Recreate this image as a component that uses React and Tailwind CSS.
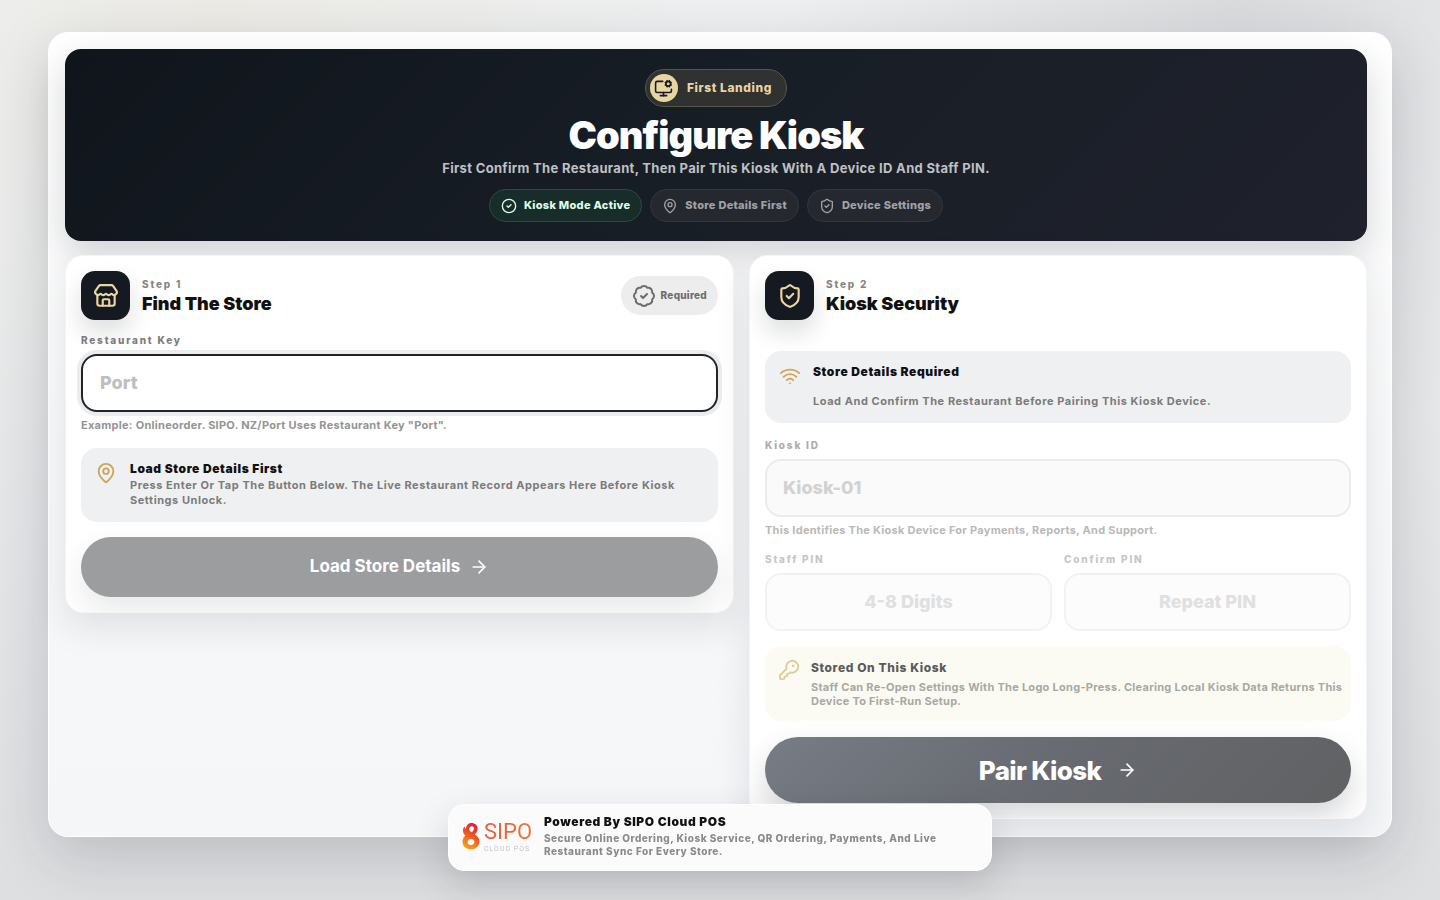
import React, { useState } from 'react';
import {
    ArrowRight, BadgeCheck, CircleCheck, KeyRound, MapPin, MonitorCog, ShieldCheck, Store, Wifi
} from 'lucide-react';

const STATUS = [
    { label: 'Kiosk Mode Active', icon: CircleCheck, style: 'bg-[#182d2a] border-[#2b4a42] text-[#dcfce7]' },
    { label: 'Store Details First', icon: MapPin, style: 'bg-[#25282f] border-[#33363d] text-[#a0a2a6]' },
    { label: 'Device Settings', icon: ShieldCheck, style: 'bg-[#25282f] border-[#33363d] text-[#a0a2a6]' },
];

function StepHeader({ icon: Icon, step, title, children }) {
    return (
        <div className="flex items-center gap-3">
            <div className="flex size-[49px] shrink-0 items-center justify-center rounded-[14px] bg-[#151a22] text-[#e8d5a0] shadow-[0_12px_24px_rgba(15,20,30,0.14)]">
                <Icon className="size-[26px]" />
            </div>
            <div className="min-w-0 flex-1">
                <p className="text-[10px] leading-3 font-extrabold tracking-[0.18em] text-[#858585]">{step}</p>
                <h2 className="mt-1 text-[18px] leading-5 font-black text-[#111]">{title}</h2>
            </div>
            {children}
        </div>
    );
}

function SipoLogo() {
    return (
        <div className="flex w-[70px] shrink-0 items-center gap-1">
            <svg viewBox="0 0 18 28" className="h-7 w-[18px] shrink-0" aria-hidden="true">
                <defs>
                    <linearGradient id="flame" x1="0.7" y1="0" x2="0.3" y2="1">
                        <stop offset="0" stopColor="#d81f3a" />
                        <stop offset="0.5" stopColor="#ee5a24" />
                        <stop offset="1" stopColor="#f9a51a" />
                    </linearGradient>
                </defs>
                <path
                    fill="url(#flame)"
                    fillRule="evenodd"
                    d="M9.400 1C13 1 15.600 3.300 15.600 6.700c0 2.600-1.400 4.300-2.900 5.800 2.900 1.500 4.800 3.900 4.800 7.100 0 4.500-3.700 7.700-8.500 7.700S.5 24.200.5 19.700c0-2.500 1.100-4.500 2.900-6.100C1.800 12.300.9 10.700.9 8.600c0-1.700.7-3.200 1.900-4.200 0 1.200.3 2.100.9 2.900C4.100 3.600 6.200 1 9.400 1ZM10 4.200C8.300 4.200 7.200 5.300 7.200 6.900c0 1.300.9 2.400 2.400 3.300C11 9.300 12 8.200 12 6.600 12 5.200 11.200 4.200 10 4.200ZM9 17c-2 0-3.400 1.300-3.400 3.100S7 23.200 9 23.200s3.400-1.300 3.400-3.100S11 17 9 17Z"
                />
            </svg>
            <div className="font-[Roboto,sans-serif]">
                <p className="bg-linear-to-r from-[#e9583c] to-[#ee7437] bg-clip-text text-[22px] leading-[26px] font-normal text-transparent">SIPO</p>
                <p className="text-[7px] leading-2 tracking-[1px] whitespace-nowrap text-[#c4c4c4]">CLOUD POS</p>
            </div>
        </div>
    );
}

export default function App() {
    const [restaurantKey, setRestaurantKey] = useState('');

    return (
        <div className="min-h-screen bg-[radial-gradient(circle_at_15%_0%,#ecebe6_0%,transparent_32%),radial-gradient(circle_at_86%_0%,#d9dbdd_0%,transparent_30%),linear-gradient(180deg,#eef0f1_0%,#e5e6e8_60%,#dedfe1_100%)] px-12 pt-8 pb-[63px] font-[Inter,sans-serif]">
            <main className="rounded-[20px] border border-white bg-linear-to-b from-white via-[#f8f9fa] to-[#f4f6f8] pt-4 pr-6 pb-[17px] pl-4 shadow-[0_20px_60px_rgba(30,35,45,0.18)]">
                <header className="flex flex-col items-center rounded-[16px] bg-linear-135 from-[#10151c] via-[#181e26] to-[#1f212c] px-6 pt-5 pb-[19px] text-center shadow-[0_14px_36px_rgba(30,32,45,0.18)]">
                    <div className="flex h-[38px] items-center gap-[9px] rounded-full border border-[#565649] bg-[#303131] pr-[14px] pl-1 text-[#e8d5a0]">
                        <span className="flex size-7 items-center justify-center rounded-full bg-[#e8d5a0] text-[#151a22]">
                            <MonitorCog className="size-[19px]" />
                        </span>
                        <span className="text-[12px] font-extrabold tracking-wider">First Landing</span>
                    </div>
                    <h1 className="mt-2 text-[38px] leading-10 font-black tracking-tight text-white">Configure Kiosk</h1>
                    <p className="mt-1 text-[13px] leading-[18px] font-bold tracking-wide text-[#bfc1c4]">
                        First Confirm The Restaurant, Then Pair This Kiosk With A Device ID And Staff PIN.
                    </p>
                    <div className="mt-3 flex flex-wrap justify-center gap-2">
                        {STATUS.map(({ label, icon: Icon, style }) => (
                            <span key={label} className={`flex h-[33px] items-center gap-[7px] rounded-full border px-[11px] text-[11px] font-extrabold tracking-wide ${style}`}>
                                <Icon className="size-4" />
                                {label}
                            </span>
                        ))}
                    </div>
                </header>

                <div className="mt-[14px] grid grid-cols-[669fr_618fr] items-start gap-[15px]">
                    {/* Step 1 */}
                    <section className="overflow-hidden rounded-[18px] border border-[#f4f4f5] bg-white p-[15px] shadow-[0_14px_36px_rgba(30,35,45,0.11)]">
                        <StepHeader icon={Store} step="Step 1" title="Find The Store">
                            <span className="flex h-[39px] items-center gap-[5px] rounded-full bg-[#ededed] px-[11px] text-[10px] font-extrabold tracking-wide text-[#6c6c6c]">
                                <BadgeCheck className="size-6" />
                                Required
                            </span>
                        </StepHeader>

                        <label htmlFor="restaurant-key" className="mt-[14px] block text-[10px] leading-3 font-extrabold tracking-[0.18em] text-[#7c7c7c]">
                            Restaurant Key
                        </label>
                        <input
                            id="restaurant-key"
                            value={restaurantKey}
                            onChange={(e) => setRestaurantKey(e.target.value)}
                            placeholder="Port"
                            className="mt-2 block h-[58px] w-full rounded-[16px] border-2 border-[#222527] bg-white px-[17px] pb-[2px] text-[18px] font-extrabold text-[#111] ring-4 ring-[#ebeced] outline-none placeholder:text-[#bfbfbf]"
                        />
                        <p className="mt-[6px] text-[11px] leading-[15px] font-bold tracking-wide text-[#949494]">
                            Example: Onlineorder. SIPO. NZ/Port Uses Restaurant Key "Port".
                        </p>

                        <div className="mt-[15px] flex gap-[13px] rounded-[16px] bg-[#eff0f2] px-[14px] pt-3 pb-[14px]">
                            <MapPin className="mt-[2px] size-[22px] shrink-0 text-[#cba65c]" />
                            <div>
                                <h3 className="text-[12px] leading-[18px] font-black tracking-wider text-[#111]">Load Store Details First</h3>
                                <p className="text-[11px] leading-[15px] font-bold tracking-wider text-[#7b7b7b]">
                                    Press Enter Or Tap The Button Below. The Live Restaurant Record Appears Here Before Kiosk Settings Unlock.
                                </p>
                            </div>
                        </div>

                        <button type="button" className="mt-[15px] flex h-[60px] w-full items-center justify-center gap-[9px] rounded-full bg-[#9c9d9f] text-[17px] font-bold text-white shadow-[0_14px_30px_rgba(30,35,45,0.1)]">
                            Load Store Details
                            <ArrowRight className="size-5" />
                        </button>
                    </section>

                    {/* Step 2 */}
                    <section className="overflow-hidden rounded-[18px] border border-[#f4f4f5] bg-white p-[15px] shadow-[0_14px_36px_rgba(30,35,45,0.11)]">
                        <StepHeader icon={ShieldCheck} step="Step 2" title="Kiosk Security" />

                        <div className="mt-[31px] flex gap-3 rounded-[16px] bg-[#eff0f2] px-[14px] pt-[13px] pb-[14px]">
                            <Wifi className="mt-[1px] size-[22px] shrink-0 text-[#cba65c]" />
                            <div>
                                <h3 className="text-[12px] leading-[15px] font-black tracking-wider text-[#111]">Store Details Required</h3>
                                <p className="mt-[15px] text-[11px] leading-[15px] font-bold tracking-wider text-[#7b7b7b]">
                                    Load And Confirm The Restaurant Before Pairing This Kiosk Device.
                                </p>
                            </div>
                        </div>

                        <label htmlFor="kiosk-id" className="mt-4 block text-[10px] leading-3 font-extrabold tracking-[0.18em] text-[#acacac]">
                            Kiosk ID
                        </label>
                        <input
                            id="kiosk-id"
                            disabled
                            placeholder="Kiosk-01"
                            className="mt-2 block h-[58px] w-full rounded-[16px] border-2 border-[#ececec] bg-[#fafafa] px-4 pb-[2px] text-[18px] font-extrabold placeholder:text-[#d2d2d2]"
                        />
                        <p className="mt-[6px] text-[11px] leading-[15px] font-bold tracking-wide text-[#b9b9b9]">
                            This Identifies The Kiosk Device For Payments, Reports, And Support.
                        </p>

                        <div className="mt-[15px] grid grid-cols-2 gap-3">
                            <div>
                                <label htmlFor="staff-pin" className="block text-[10px] leading-3 font-extrabold tracking-[0.18em] text-[#c6c6c6]">
                                    Staff PIN
                                </label>
                                <input
                                    id="staff-pin"
                                    disabled
                                    placeholder="4-8 Digits"
                                    className="mt-2 block h-[58px] w-full rounded-[16px] border-2 border-[#f2f2f2] bg-[#fcfcfc] px-4 pb-[2px] text-center text-[18px] font-extrabold placeholder:text-[#e0e0e0]"
                                />
                            </div>
                            <div>
                                <label htmlFor="confirm-pin" className="block text-[10px] leading-3 font-extrabold tracking-[0.18em] text-[#c6c6c6]">
                                    Confirm PIN
                                </label>
                                <input
                                    id="confirm-pin"
                                    disabled
                                    placeholder="Repeat PIN"
                                    className="mt-2 block h-[58px] w-full rounded-[16px] border-2 border-[#f2f2f2] bg-[#fcfcfc] px-4 pb-[2px] text-center text-[18px] font-extrabold placeholder:text-[#e0e0e0]"
                                />
                            </div>
                        </div>

                        <div className="mt-[15px] flex gap-[11px] rounded-[16px] bg-[#fcfbf3] pt-[13px] pr-2 pb-[13px] pl-[13px]">
                            <KeyRound className="size-[22px] shrink-0 text-[#dfcc92]" />
                            <div>
                                <h3 className="text-[12px] leading-[17px] font-extrabold tracking-wider text-[#5a5a5a]">Stored On This Kiosk</h3>
                                <p className="mt-1 text-[11px] leading-[14px] font-bold tracking-wide text-[#a8a8a4]">
                                    Staff Can Re-Open Settings With The Logo Long-Press. Clearing Local Kiosk Data Returns This Device To First-Run Setup.
                                </p>
                            </div>
                        </div>

                        <button type="button" disabled className="mt-4 flex h-[66px] w-full items-center justify-center gap-4 rounded-full bg-linear-135 from-[#777c85] via-[#676a70] to-[#606163] text-[26px] font-extrabold tracking-tight text-white shadow-[0_14px_30px_rgba(30,35,45,0.18)]">
                            Pair Kiosk
                            <ArrowRight className="size-5" />
                        </button>
                    </section>
                </div>
            </main>

            <footer className="fixed bottom-[29px] left-1/2 flex w-[544px] max-w-full -translate-x-1/2 items-center gap-3 rounded-[16px] border border-white bg-[#fbfbfb] px-[13px] pt-2 pb-3 shadow-[0_14px_36px_rgba(30,35,45,0.16)]">
                <SipoLogo />
                <div>
                    <h3 className="mb-[2px] text-[12px] leading-[17px] font-black tracking-wider text-[#111]">Powered By SIPO Cloud POS</h3>
                    <p className="text-[10px] leading-[13px] font-extrabold tracking-wider text-[#8a8a8a]">
                        Secure Online Ordering, Kiosk Service, QR Ordering, Payments, And Live Restaurant Sync For Every Store.
                    </p>
                </div>
            </footer>
        </div>
    );
}
